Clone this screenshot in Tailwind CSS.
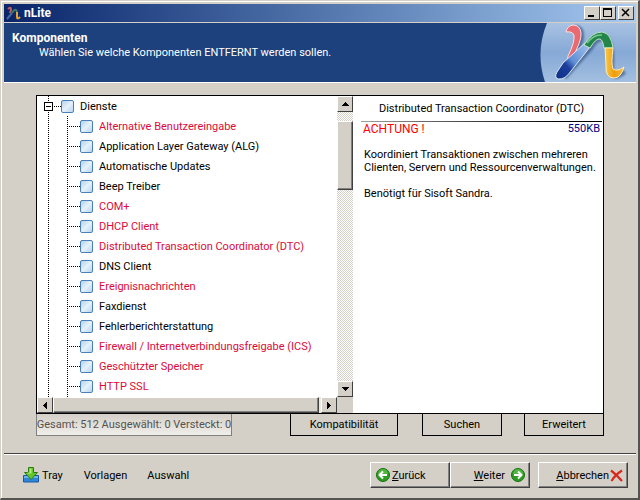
<!DOCTYPE html>
<html lang="de">
<head>
<meta charset="utf-8">
<meta name="viewport" content="width=device-width, initial-scale=1">
<title>nLite</title>
<script src="https://cdn.jsdelivr.net/npm/@tailwindcss/browser@4"></script>
</head>
<body class="h-screen overflow-hidden bg-[#d4d0c8] font-[Roboto,'Liberation_Sans',Arial,sans-serif] text-[11px] leading-[13px] text-black">
<div class="flex h-full flex-col border-t border-r-2 border-b-2 border-l border-t-[#d4d0c8] border-r-[#55534f] border-b-[#55534f] border-l-[#d4d0c8]">
<div class="flex min-h-0 flex-1 flex-col border-t border-l border-white pt-[2px] pr-[2px] pb-[2px] pl-[2px]">

  <!-- Title bar -->
  <div class="flex h-[18px] shrink-0 items-center bg-linear-to-r from-[#0a246a] to-[#a6caf0] pr-[2px] pl-[2px]">
    <svg class="h-4 w-4" viewBox="0 0 16 16" fill="none" stroke-width="2" aria-hidden="true">
      <path d="M2 4 Q5 1 5 5 L4 8" stroke="#b8606a"/>
      <path d="M1 14 L6 8" stroke="#46689c"/>
      <path d="M6 8 Q10 2 11 7" stroke="#3f7a66"/>
      <path d="M11 7 V12 Q11 15 14 12" stroke="#e8a428"/>
    </svg>
    <h1 class="ml-[2px] flex-1 text-[12px] font-bold text-white">nLite</h1>
    <div class="flex">
      <button aria-label="Minimieren" class="flex h-[14px] w-4 items-center justify-center border border-t-white border-r-[#404040] border-b-[#404040] border-l-white bg-[#d4d0c8]">
        <svg class="h-[10px] w-3" viewBox="0 0 12 10" aria-hidden="true"><path d="M2 7h6v2H2z"/></svg>
      </button>
      <button aria-label="Maximieren" class="flex h-[14px] w-4 items-center justify-center border border-t-white border-r-[#404040] border-b-[#404040] border-l-white bg-[#d4d0c8]">
        <svg class="h-[10px] w-3" viewBox="0 0 12 10" aria-hidden="true"><path fill-rule="evenodd" d="M1 0h9v9H1zM2 2v6h7V2z"/></svg>
      </button>
      <button aria-label="Schließen" class="ml-[2px] flex h-[14px] w-4 items-center justify-center border border-t-white border-r-[#404040] border-b-[#404040] border-l-white bg-[#d4d0c8]">
        <svg class="h-[10px] w-3" viewBox="0 0 12 10" aria-hidden="true"><path d="M2 1 9 8M9 1 2 8" stroke="#000" stroke-width="1.500"/></svg>
      </button>
    </div>
  </div>

  <!-- Page header -->
  <header class="mt-px flex h-[59px] shrink-0 justify-between bg-[#1c417c] text-white">
    <div class="pt-2 pl-2">
      <h2 class="text-[12px] leading-[14px] font-bold">Komponenten</h2>
      <p class="pl-[27px] leading-[15px]">Wählen Sie welche Komponenten ENTFERNT werden sollen.</p>
    </div>
    <svg class="h-[59px] w-[96px]" viewBox="0 0 96 59" fill="none" aria-hidden="true">
      <defs>
        <linearGradient id="sky" x1="0" y1="0" x2="0" y2="1"><stop offset="0" stop-color="#a9c2e2"/><stop offset=".5" stop-color="#86a9d6"/><stop offset="1" stop-color="#a3bfe0"/></linearGradient>
        <linearGradient id="blue" x1="1" y1="0" x2="0" y2="1"><stop offset="0" stop-color="#a5c4ee"/><stop offset=".5" stop-color="#5f8fd6"/><stop offset=".65" stop-color="#1c3f9c"/><stop offset="1" stop-color="#0e2f88"/></linearGradient>
        <linearGradient id="gold" x1="0" y1="0" x2="1" y2="0"><stop offset="0" stop-color="#f9c84a"/><stop offset=".5" stop-color="#ee9c0c"/><stop offset="1" stop-color="#f8c038"/></linearGradient>
        <filter id="soft" x="-20%" y="-20%" width="140%" height="140%"><feGaussianBlur stdDeviation="1"/></filter>
      </defs>
      <path d="M7 0Q-5 29 5 59H96V0Z" fill="url(#sky)"/>
      <path d="M34 5Q42 4 41 15Q39 24 31 38M24 54L50 25Q58 12 66 16Q72 20 71 44Q72 59 84 48" stroke="#24456f" stroke-opacity=".6" stroke-width="6" filter="url(#soft)"/>
      <path d="M26 9Q27 3 33 2Q40 2 41 10Q42 18 31 37L27 38L28 33Q35 19 34 12Q32 8 26 9Z" fill="#ea6a72" stroke="#f8dfe2" stroke-width="1"/>
      <path d="M17 49L23 40L45 20L50 24L31 48Q25 57 18 56Q14 54 17 49Z" fill="url(#blue)" stroke="#dbe6f5" stroke-width="1"/>
      <path d="M44 22Q52 9 62 9Q71 10 73 25H64Q63 17 60 16Q56 15 50 25Z" fill="#23854a" stroke="#bfe3ca" stroke-width="1"/>
      <path d="M47 20Q54 11 62 12" stroke="#7cc894" stroke-width="1.500"/>
      <path d="M65 25H73Q71 41 73 46Q77 49 84 44Q81 55 74 55Q65 55 66 42Z" fill="url(#gold)" stroke="#fdeebc" stroke-width="1"/>
    </svg>
  </header>

  <!-- Work area -->
  <main class="flex min-h-0 flex-1 flex-col border-t border-white px-8 pt-3 pb-[17px]">
    <div class="flex min-h-0 flex-1 border border-black bg-white">
      <div class="flex w-[316px] shrink-0 flex-col">
        <div class="flex min-h-0 flex-1">
          <!-- Component tree -->
          <div class="flex min-w-0 flex-1 overflow-hidden pl-[11px]">
            <div class="w-px shrink-0 bg-[repeating-linear-gradient(#000_0_1px,transparent_1px_2px)]"></div>
            <div class="flex min-w-0 flex-1 flex-col">
              <div class="-ml-[5px] flex h-5 shrink-0 items-center">
                <button aria-label="Dienste zuklappen" class="relative flex h-[9px] w-[9px] items-center justify-center border border-black bg-white"><span class="h-px w-[5px] bg-black"></span></button>
                <span class="h-px w-2 bg-[repeating-linear-gradient(90deg,#fff_0_1px,#000_1px_2px)]"></span>
                <label class="flex items-center gap-[6px]"><input type="checkbox" class="h-[13px] w-[13px] appearance-none rounded-[2px] border border-[#4a80b8] bg-linear-to-br from-[#b4d2ee] via-[#e6f1fa] to-[#b9d5ee]">Dienste</label>
              </div>
              <div class="flex min-h-0 flex-1 pl-[18px]">
                <div class="w-px shrink-0 bg-[repeating-linear-gradient(#000_0_1px,transparent_1px_2px)]"></div>
                <ul id="services" class="min-w-0 flex-1 whitespace-nowrap"></ul>
              </div>
            </div>
          </div>
          <!-- Vertical scroll bar -->
          <div class="flex w-4 shrink-0 flex-col bg-[repeating-conic-gradient(#d4d0c8_0_25%,#fff_0_50%)] bg-[length:2px_2px]">
            <button aria-label="Nach oben" class="flex h-4 shrink-0 items-center justify-center border border-t-white border-r-[#404040] border-b-[#404040] border-l-white bg-[#d4d0c8]"><svg class="h-1 w-[7px]" viewBox="0 0 7 4" aria-hidden="true"><path d="M3 0h1v1h1v1h1v1h1v1H0V3h1V2h1V1h1z"/></svg></button>
            <div class="mt-[9px] h-[69px] border border-t-white border-r-[#404040] border-b-[#404040] border-l-white bg-[#d4d0c8] shadow-[inset_-1px_-1px_#808080]"></div>
            <button aria-label="Nach unten" class="mt-auto flex h-4 shrink-0 items-center justify-center border border-t-white border-r-[#404040] border-b-[#404040] border-l-white bg-[#d4d0c8]"><svg class="h-1 w-[7px]" viewBox="0 0 7 4" aria-hidden="true"><path d="M0 0h7v1H6v1H5v1H4v1H3V3H2V2H1V1H0z"/></svg></button>
          </div>
        </div>
        <!-- Horizontal scroll bar -->
        <div class="flex h-4 shrink-0 bg-[#d4d0c8] pr-4">
          <button aria-label="Nach links" class="flex w-4 shrink-0 items-center justify-center border border-t-white border-r-[#404040] border-b-[#404040] border-l-white bg-[#d4d0c8]"><svg class="h-[7px] w-1" viewBox="0 0 4 7" aria-hidden="true"><path d="M4 0v7H3V6H2V5H1V4H0V3h1V2h1V1h1V0z"/></svg></button>
          <div class="flex-1 border border-t-white border-r-[#404040] border-b-[#404040] border-l-white bg-[#d4d0c8] shadow-[inset_-1px_-1px_#808080]"></div>
          <div class="w-[2px] bg-[#eae8e4]"></div>
          <button aria-label="Nach rechts" class="flex w-4 shrink-0 items-center justify-center border border-t-white border-r-[#404040] border-b-[#404040] border-l-white bg-[#d4d0c8]"><svg class="h-[7px] w-1" viewBox="0 0 4 7" aria-hidden="true"><path d="M0 0h1v1h1v1h1v1h1v1H3v1H2v1H1v1H0z"/></svg></button>
        </div>
      </div>
      <!-- Description -->
      <section class="min-w-0 flex-1 pt-[6px] pr-px pl-2">
        <h3 class="pb-[5px] text-center leading-[14px]">Distributed Transaction Coordinator (DTC)</h3>
        <div class="h-px bg-linear-to-r from-[#a0a0a0] to-black"></div>
        <div class="flex justify-between pr-[2px] pl-[2px] leading-[14px]"><strong class="text-[12px] font-normal text-[#ff0000]">ACHTUNG !</strong><span class="text-[#000080]">550KB</span></div>
        <div class="pt-3 pl-[3px]">
          <p>Koordiniert Transaktionen zwischen mehreren Clienten, Servern und Ressourcenverwaltungen.</p>
          <p class="mt-[13px]">Benötigt für Sisoft Sandra.</p>
        </div>
      </section>
    </div>
    <div class="flex h-[22px] shrink-0">
      <output class="flex h-[22px] w-[196px] items-center justify-center border border-t-0 border-[#808080] bg-linear-to-b from-[#d4d0c8] to-[#f0eeea] whitespace-nowrap text-[#55534f]">Gesamt: 512 Ausgewählt: 0 Versteckt: 0</output>
      <button class="ml-auto w-[108px] border border-t-0 border-black">Kompatibilität</button>
      <button class="ml-6 w-[80px] border border-t-0 border-black">Suchen</button>
      <button class="ml-[22px] w-[80px] border border-t-0 border-black">Erweitert</button>
    </div>
  </main>

  <!-- Footer -->
  <footer class="flex h-[43px] shrink-0 items-center border-t border-[#404040] pr-2 pl-[19px] shadow-[inset_0_1px_#fff]">
    <button class="flex items-center gap-[3px]">
      <svg class="h-4 w-4" viewBox="0 0 16 16" aria-hidden="true">
        <path d="M0.500 8.500H15.500V15H.5Z" fill="#2f86d8" stroke="#1459a8"/>
        <path d="M1 9h14v2H1z" fill="#6cb6f0"/>
        <path d="M5.500.5H10.500V5.500H14.500L8 12.500L1.500 5.500H5.500Z" fill="#62c52c" stroke="#2c7d10"/>
        <path d="M6.500 1.500h2v5H4l1-1h1.500z" fill="#b2ea7c"/>
      </svg>Tray</button>
    <button class="ml-[21px]">Vorlagen</button>
    <button class="ml-[20px]">Auswahl</button>
    <button class="ml-auto flex h-[26px] w-20 items-center gap-[2px] border border-t-white border-r-[#404040] border-b-[#404040] border-l-white pl-[5px] shadow-[inset_-1px_-1px_#808080]">
      <svg class="h-[14px] w-[14px]" viewBox="0 0 14 14" aria-hidden="true"><circle cx="7" cy="7" r="6.500" fill="#2c9c22" stroke="#187010"/><path d="M2 6a5 5 0 0 1 10 0Q7 8 2 6" fill="#69c656" opacity=".6"/><path d="M11 7H4M7 3.500L3.500 7L7 10.500" stroke="#fff" stroke-width="2" fill="none"/></svg>
      <span><u>Z</u>urück</span></button>
    <button class="flex h-[26px] w-20 items-center justify-end gap-[6px] border border-t-white border-r-[#404040] border-b-[#404040] border-l-white pr-1 shadow-[inset_-1px_-1px_#808080]">
      <span><u>W</u>eiter</span>
      <svg class="h-[14px] w-[14px]" viewBox="0 0 14 14" aria-hidden="true"><circle cx="7" cy="7" r="6.500" fill="#2c9c22" stroke="#187010"/><path d="M2 6a5 5 0 0 1 10 0Q7 8 2 6" fill="#69c656" opacity=".6"/><path d="M3 7H10M7 3.500L10.500 7L7 10.500" stroke="#fff" stroke-width="2" fill="none"/></svg></button>
    <button class="ml-2 flex h-[26px] w-[90px] items-center justify-end gap-px border border-t-white border-r-[#404040] border-b-[#404040] border-l-white pr-1 shadow-[inset_-1px_-1px_#808080]">
      <span><u>A</u>bbrechen</span>
      <svg class="h-[13px] w-[13px]" viewBox="0 0 13 13" aria-hidden="true"><path d="M1 1.500Q7 6 12 12M12 1.500Q5 6 1.500 12" stroke="#d8281c" stroke-width="2.200" fill="none"/></svg></button>
  </footer>
</div>
</div>
<script>
  const services = [
    ["Alternative Benutzereingabe", true],
    ["Application Layer Gateway (ALG)", false],
    ["Automatische Updates", false],
    ["Beep Treiber", false],
    ["COM+", true],
    ["DHCP Client", true],
    ["Distributed Transaction Coordinator (DTC)", true],
    ["DNS Client", false],
    ["Ereignisnachrichten", true],
    ["Faxdienst", false],
    ["Fehlerberichterstattung", false],
    ["Firewall / Internetverbindungsfreigabe (ICS)", true],
    ["Geschützter Speicher", true],
    ["HTTP SSL", true]
  ];
  document.getElementById("services").innerHTML = services.map(([name, warn]) => `
    <li class="flex h-5 items-center">
      <span class="h-px w-3 bg-[repeating-linear-gradient(90deg,#fff_0_1px,#000_1px_2px)]"></span>
      <label class="flex items-center gap-[6px] ${warn ? "text-[#dc0a38]" : "text-black"}"><input type="checkbox" class="h-[13px] w-[13px] appearance-none rounded-[2px] border border-[#4a80b8] bg-linear-to-br from-[#b4d2ee] via-[#e6f1fa] to-[#b9d5ee]">${name}</label>
    </li>`).join("");
</script>
</body>
</html>
